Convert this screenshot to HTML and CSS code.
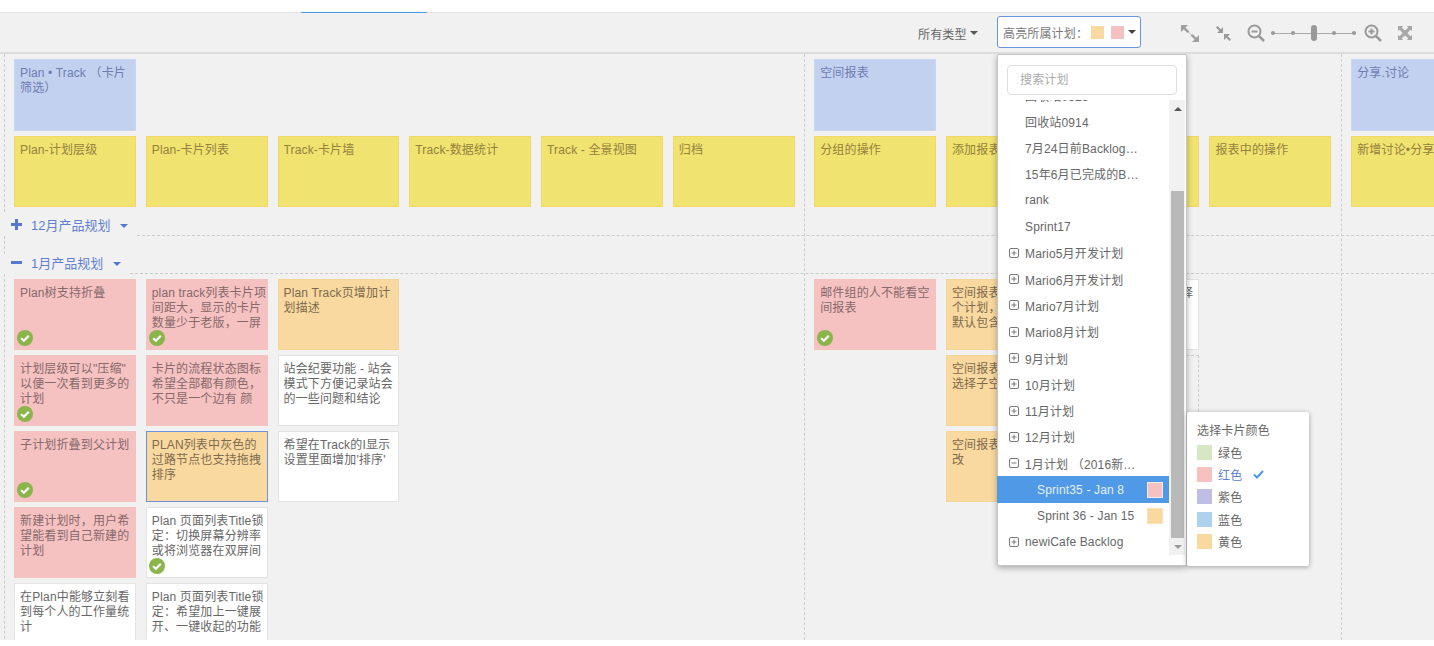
FILE: index.html

```html
<!DOCTYPE html>
<html lang="zh-CN">
<head>
  <meta charset="UTF-8">
  <meta name="viewport" content="width=device-width, initial-scale=1.0">
  <title>Plan</title>
  <link rel="stylesheet" href="styles.css">
</head>
<body>

  <svg class="defs" width="0" height="0">
    <symbol id="i-plus" viewBox="0 0 10 10">
      <rect x="0.5" y="0.5" width="9" height="9" rx="1.5" fill="none" stroke="#777"/>
      <path d="M2.5 5h5M5 2.5v5" stroke="#777" fill="none"/>
    </symbol>
    <symbol id="i-minus" viewBox="0 0 10 10">
      <rect x="0.5" y="0.5" width="9" height="9" rx="1.5" fill="none" stroke="#777"/>
      <path d="M2.5 5h5" stroke="#777" fill="none"/>
    </symbol>
    <symbol id="i-check" viewBox="0 0 16 16">
      <circle cx="8" cy="8" r="8" fill="#8ab54a"/>
      <path d="M4.2 8.2l2.7 2.6 4.9-5" fill="none" stroke="#fff" stroke-width="2.2"/>
    </symbol>
  </svg>

  <div class="topbar"><div class="tab"></div></div>

  <div class="toolbar">
    <div class="type-filter">所有类型<span class="caret"></span></div>
    <div class="highlight-btn">
      <span>高亮所属计划：</span>
      <span class="mini-swatch orange first"></span>
      <span class="mini-swatch pink"></span>
      <span class="caret dark"></span>
    </div>
    <svg class="tool tool-expand" width="18" height="17" viewBox="0 0 18 17">
      <path d="M0 0h7L0 7zM18 17h-7l7-7z" fill="#a0a0a0"/>
      <path d="M3 3l4.500 4.200M15 14l-4.500-4.200" stroke="#a0a0a0" stroke-width="2.400" fill="none"/>
      <path d="M7 7l4 3" stroke="#c4c4c4" stroke-width="1" fill="none"/>
    </svg>
    <svg class="tool tool-compress" width="15" height="15" viewBox="0 0 15 15">
      <path d="M0.700 0.700l4.500 4.500M14.300 14.300l-4.500-4.500" stroke="#9a9a9a" stroke-width="2.200" fill="none"/>
      <path d="M7 7H1L7 1zM8 8h6l-6 6z" fill="#9a9a9a"/>
    </svg>
    <svg class="tool tool-zoomout" width="18" height="18" viewBox="0 0 18 18">
      <circle cx="7.500" cy="7.500" r="6" fill="none" stroke="#9a9a9a" stroke-width="2"/>
      <path d="M4.500 7.500h6" stroke="#9a9a9a" stroke-width="2"/>
      <path d="M12 12l5 5" stroke="#9a9a9a" stroke-width="2.500"/>
    </svg>
    <div class="slider">
      <span class="dot"></span><span class="dot"></span><span class="thumb"></span><span class="dot"></span><span class="dot"></span>
    </div>
    <svg class="tool tool-zoomin" width="18" height="18" viewBox="0 0 18 18">
      <circle cx="7.500" cy="7.500" r="6" fill="none" stroke="#9a9a9a" stroke-width="2"/>
      <path d="M4.500 7.500h6M7.500 4.500v6" stroke="#9a9a9a" stroke-width="2"/>
      <path d="M12 12l5 5" stroke="#9a9a9a" stroke-width="2.500"/>
    </svg>
    <svg class="tool tool-full" width="14" height="14" viewBox="0 0 14 14">
      <path d="M0 0h5L3.800 1.700 7 4.600 10.200 1.700 9 0h5v5L12.300 3.800 9.400 7l2.900 3.200L14 9v5H9l1.200-1.700L7 9.400l-3.200 2.900L5 14H0V9l1.700 1.200L4.600 7 1.700 3.800 0 5z" fill="#a8a8a8"/>
    </svg>
  </div>

  <div class="board">
    <div class="col-line line-b"></div>
    <div class="col-line line-c"></div>

    <!-- top story map -->
    <div class="groups story">
      <div class="group first">
        <div class="story-row">
          <div class="card blue tall"><div class="card-text">Plan • Track （卡片筛选）</div></div>
        </div>
        <div class="story-row">
          <div class="card yellow"><div class="card-text">Plan-计划层级</div></div>
          <div class="card yellow"><div class="card-text">Plan-卡片列表</div></div>
          <div class="card yellow"><div class="card-text">Track-卡片墙</div></div>
          <div class="card yellow"><div class="card-text">Track-数据统计</div></div>
          <div class="card yellow"><div class="card-text">Track - 全景视图</div></div>
          <div class="card yellow"><div class="card-text">归档</div></div>
        </div>
      </div>
      <div class="group">
        <div class="story-row">
          <div class="card blue tall"><div class="card-text">空间报表</div></div>
        </div>
        <div class="story-row">
          <div class="card yellow"><div class="card-text">分组的操作</div></div>
          <div class="card yellow"><div class="card-text">添加报表</div></div>
          <div class="card yellow"><div class="card-text">报表设置</div></div>
          <div class="card yellow"><div class="card-text">报表中的操作</div></div>
        </div>
      </div>
      <div class="group">
        <div class="story-row">
          <div class="card blue tall"><div class="card-text">分享.讨论</div></div>
        </div>
        <div class="story-row">
          <div class="card yellow"><div class="card-text">新增讨论•分享</div></div>
        </div>
      </div>
    </div>

    <div class="lane-head">
      <svg class="lane-icon" width="11" height="11" viewBox="0 0 11 11"><path d="M0 4h4V0h3v4h4v3H7v4H4V7H0z" fill="#5577cf"/></svg>
      <span class="lane-title">12月产品规划</span>
      <span class="caret blue-caret"></span>
      <span class="lane-line"></span>
    </div>
    <div class="lane-gap"></div>

    <div class="lane-head second">
      <svg class="lane-icon" width="11" height="11" viewBox="0 0 11 11"><path d="M0 4h11v3H0z" fill="#5577cf"/></svg>
      <span class="lane-title">1月产品规划</span>
      <span class="caret blue-caret"></span>
      <span class="lane-line"></span>
    </div>

    <div class="groups">
      <div class="group first lane-body">
        <div class="col">
          <div class="card pink"><div class="card-text">Plan树支持折叠</div><svg class="done"><use href="#i-check"/></svg></div>
          <div class="card pink"><div class="card-text">计划层级可以"压缩"<wbr>以便一次看到更多的计划</div><svg class="done"><use href="#i-check"/></svg></div>
          <div class="card pink"><div class="card-text">子计划折叠到父计划</div><svg class="done"><use href="#i-check"/></svg></div>
          <div class="card pink"><div class="card-text">新建计划时，用户希望能看到自己新建的计划</div></div>
          <div class="card white"><div class="card-text">在Plan中能够立刻看到每个人的工作量统计</div></div>
        </div>
        <div class="col">
          <div class="card pink"><div class="card-text">plan track列表卡片项间距大，显示的卡片数量少于老版，一屏</div><svg class="done"><use href="#i-check"/></svg></div>
          <div class="card pink"><div class="card-text">卡片的流程状态图标希望全部都有颜色，不只是一个边有 颜</div></div>
          <div class="card orange selected"><div class="card-text">PLAN列表中灰色的过路节点也支持拖拽排序</div></div>
          <div class="card white"><div class="card-text">Plan 页面列表Title锁定：切换屏幕分辨率或将浏览器在双屏间</div><svg class="done"><use href="#i-check"/></svg></div>
          <div class="card white"><div class="card-text">Plan 页面列表Title锁定：希望加上一键展开、一键收起的功能</div></div>
        </div>
        <div class="col">
          <div class="card orange"><div class="card-text">Plan Track页增加计划描述</div></div>
          <div class="card white"><div class="card-text">站会纪要功能 - 站会模式下方便记录站会的一些问题和结论</div></div>
          <div class="card white"><div class="card-text">希望在Track的I显示设置里面增加'排序'</div></div>
        </div>
        <div class="col"></div>
        <div class="col"></div>
        <div class="col"></div>
      </div>
      <div class="group lane-body">
        <div class="col">
          <div class="card pink"><div class="card-text">邮件组的人不能看空间报表</div><svg class="done"><use href="#i-check"/></svg></div>
        </div>
        <div class="col">
          <div class="card orange"><div class="card-text">空间报表可以选择多个计划，默认全选，默认包含子计划</div></div>
          <div class="card orange"><div class="card-text">空间报表支持按空间选择子空间</div></div>
          <div class="card orange"><div class="card-text">空间报表颜色支持修改</div></div>
        </div>
        <div class="col">
          <div class="card white"><div class="card-text">在空间报表中可选择</div></div>
          <div class="card placeholder"></div>
        </div>
        <div class="col"></div>
      </div>
    </div>

    <!-- plan dropdown -->
    <div class="plan-menu">
      <div class="search">搜索计划</div>
      <div class="menu-body">
        <div class="plan-list">
          <div class="plan-row cut"><span class="plan-name">回收站0825</span></div>
          <div class="plan-row"><span class="plan-name">回收站0914</span></div>
          <div class="plan-row"><span class="plan-name">7月24日前Backlog整理计划</span></div>
          <div class="plan-row"><span class="plan-name">15年6月已完成的Backlog</span></div>
          <div class="plan-row"><span class="plan-name">rank</span></div>
          <div class="plan-row"><span class="plan-name">Sprint17</span></div>
          <div class="plan-row parent"><svg class="tree-icon"><use href="#i-plus"/></svg><span class="plan-name">Mario5月开发计划</span></div>
          <div class="plan-row parent"><svg class="tree-icon"><use href="#i-plus"/></svg><span class="plan-name">Mario6月开发计划</span></div>
          <div class="plan-row parent"><svg class="tree-icon"><use href="#i-plus"/></svg><span class="plan-name">Mario7月计划</span></div>
          <div class="plan-row parent"><svg class="tree-icon"><use href="#i-plus"/></svg><span class="plan-name">Mario8月计划</span></div>
          <div class="plan-row parent"><svg class="tree-icon"><use href="#i-plus"/></svg><span class="plan-name">9月计划</span></div>
          <div class="plan-row parent"><svg class="tree-icon"><use href="#i-plus"/></svg><span class="plan-name">10月计划</span></div>
          <div class="plan-row parent"><svg class="tree-icon"><use href="#i-plus"/></svg><span class="plan-name">11月计划</span></div>
          <div class="plan-row parent"><svg class="tree-icon"><use href="#i-plus"/></svg><span class="plan-name">12月计划</span></div>
          <div class="plan-row parent"><svg class="tree-icon"><use href="#i-minus"/></svg><span class="plan-name">1月计划 （2016新版计划）</span></div>
          <div class="plan-row child active"><span class="plan-name">Sprint35 - Jan 8</span><span class="swatch pink"></span></div>
          <div class="plan-row child"><span class="plan-name">Sprint 36 - Jan 15</span><span class="swatch orange"></span></div>
          <div class="plan-row parent"><svg class="tree-icon"><use href="#i-plus"/></svg><span class="plan-name">newiCafe Backlog</span></div>
        </div>
        <div class="scrollbar">
          <div class="scroll-up"><span class="caret up"></span></div>
          <div class="scroll-thumb"></div>
          <div class="scroll-down"><span class="caret grey"></span></div>
        </div>
      </div>
    </div>

    <div class="color-menu">
      <div class="color-title">选择卡片颜色</div>
      <div class="color-row"><span class="color-box green"></span>绿色</div>
      <div class="color-row picked"><span class="color-box pink"></span>红色<svg class="tick" width="11" height="9" viewBox="0 0 11 9"><path d="M1 4.500l3 3 6-6.500" fill="none" stroke="#4a98e8" stroke-width="2"/></svg></div>
      <div class="color-row"><span class="color-box purple"></span>紫色</div>
      <div class="color-row"><span class="color-box sky"></span>蓝色</div>
      <div class="color-row"><span class="color-box orange"></span>黄色</div>
    </div>
  </div>

  <div class="bottom-strip"></div>

</body>
</html>
```

FILE: styles.css

```css
* { box-sizing: border-box; }
html, body { height: 100%; }
body {
  margin: 0;
  background: #f1f1f1;
  font-family: "Liberation Sans", "Noto Sans CJK TC", sans-serif;
  font-size: 12px;
  letter-spacing: 0.15px;
  color: #666;
  overflow: hidden;
}
.defs { position: absolute; }

.topbar {
  height: 13px;
  background: #fff;
  border-bottom: 1px solid #e4e4e4;
  padding-left: 301px;
}
.tab {
  width: 126px;
  height: 13px;
  border-bottom: 1px solid #4a98e8;
}

.toolbar {
  height: 41px;
  border-bottom: 2px solid #dcdcdc;
  display: flex;
  align-items: center;
  padding: 0 0 1px 918px;
}
.type-filter { flex: none; display: flex; align-items: center; width: 79px; margin-top: 2px; color: #666; }
.caret {
  display: inline-block;
  width: 0;
  height: 0;
  border-left: 4px solid transparent;
  border-right: 4px solid transparent;
  border-top: 4px solid #555;
  margin-left: 3px;
}
.caret.dark { border-top-color: #444; margin-left: 4px; }
.caret.grey { border-top-color: #999; margin: 0; }
.caret.up { border-top: 0; border-bottom: 4px solid #555; margin: 0; }
.highlight-btn {
  flex: none;
  width: 144px;
  height: 32px;
  background: #fff;
  border: 1px solid #6d92dd;
  border-radius: 3px;
  display: flex;
  align-items: center;
  padding-left: 5px;
  color: #777;
}
.mini-swatch { flex: none; width: 13px; height: 13px; }
.mini-swatch.first { margin-left: 3px; margin-right: 7px; }
.mini-swatch.orange { background: #f9d9a0; }
.mini-swatch.pink { background: #f6c1c1; }

.tool { flex: none; margin-top: 2px; }
.tool-expand { margin-left: 40px; }
.tool-compress { margin-left: 17px; }
.tool-zoomout { margin-left: 16px; }
.tool-zoomin { margin-left: 8px; }
.tool-full { margin-left: 16px; }
.slider {
  flex: none;
  width: 85px;
  margin: 2px 0 0 6px;
  height: 16px;
  display: flex;
  align-items: center;
  justify-content: space-between;
  background: linear-gradient(#aaa, #aaa) center / 100% 1px no-repeat;
}
.dot { width: 4px; height: 4px; border-radius: 50%; background: #999; }
.thumb { width: 6px; height: 16px; border-radius: 3px; background: #999; }

.board {
  position: relative;
  height: 586px;
  overflow: hidden;
}
.col-line {
  position: absolute;
  top: 0;
  bottom: 0;
  border-left: 1px dashed #ccc;
}
.line-b { left: 804px; }
.line-c { left: 1341px; }

.groups { display: flex; width: 1600px; }
.group { flex: none; padding: 0 10px; }
.group.first { width: 800.2px; margin-left: 4px; padding-left: 9px; padding-right: 0; border-left: 1px dashed #ccc; }
.story .group { padding-top: 5px; padding-bottom: 5px; display: flex; flex-direction: column; gap: 5px; }
.story-row { display: flex; gap: 10px; }

.card {
  position: relative;
  flex: none;
  width: 121.75px;
  height: 71px;
  border: 1px solid #eee;
  padding: 6px 0 0 5px;
  line-height: 15px;
  overflow: hidden;
}
.card.tall { height: 72px; }
.card-text { max-height: 45px; overflow: hidden; }
.card.blue { background: #c2d1f0; border-color: #cbd8f3; color: #6f7cb0; }
.card.yellow { background: #f0e370; border-color: #f1d768; color: #93813c; }
.card.pink { background: #f6c1c1; border-color: #f2c4c0; color: #85696b; }
.card.orange { background: #f9d9a0; border-color: #f5d596; color: #7d6a4e; }
.card.white { background: #fff; border-color: #e3e3e3; color: #666; }
.card.selected { border-color: #6d92dd; }
.card.placeholder { background: none; border: 1px dashed #ccc; }
.done {
  position: absolute;
  left: 2px;
  bottom: 3px;
  width: 16px;
  height: 16px;
}

.lane-head {
  height: 24px;
  display: flex;
  align-items: center;
  padding-left: 11px;
  color: #5f7ed0;
  font-size: 13px;
  letter-spacing: 0;
}
.lane-head.second { height: 20px; padding-bottom: 4px; }
.second .lane-line { margin-bottom: -4px; }
.lane-icon { flex: none; margin-right: 9px; }
.lane-title { flex: none; }
.blue-caret { border-top-color: #5577cf; margin: 3px 0 0 10px; flex: none; }
.lane-line {
  flex: 1;
  align-self: flex-end;
  margin-left: 9px;
  border-bottom: 1px dashed #ccc;
}
.lane-gap { height: 18px; margin-left: 4px; border-left: 1px dashed #ccc; }

.lane-body { display: flex; gap: 10px; padding-top: 5px; height: 400px; }
.col { flex: none; width: 121.75px; display: flex; flex-direction: column; gap: 5px; }

/* dropdown over the board */
.plan-menu {
  position: absolute;
  left: 997px;
  top: 0;
  width: 190px;
  height: 512px;
  background: #fff;
  border: 1px solid #c4c4c4;
  box-shadow: 0 2px 6px rgba(0,0,0,0.3);
  border-radius: 2px;
  z-index: 2;
}
.search {
  margin: 10px 9px 5px;
  height: 30px;
  border: 1px solid #ddd;
  border-radius: 4px;
  padding-left: 12px;
  line-height: 28px;
  color: #aaa;
}
.menu-body { display: flex; height: 455px; }
.plan-list { width: 172px; overflow: hidden; flex: none; margin-left: -1px; }
.plan-row {
  height: 26.3px;
  display: flex;
  align-items: center;
  padding-left: 28px;
  color: #666;
}
.plan-row.cut { margin-top: -18.1px; }
.plan-row.parent { padding-left: 12px; }
.plan-row.child { padding-left: 40px; }
.plan-row.active { background: #4f99e6; color: #e4f0fc; }
.plan-name {
  max-width: 114px;
  white-space: nowrap;
  overflow: hidden;
  text-overflow: ellipsis;
}
.plan-row.child .plan-name { max-width: 104px; width: 104px; }
.tree-icon { flex: none; width: 10px; height: 10px; margin-right: 6px; }
.swatch {
  width: 16px;
  height: 16px;
  margin-left: 6px;
  border: 1px solid #eee;
}
.swatch.pink { background: #f6c1c1; }
.swatch.orange { background: #f9d9a0; border-color: #fbe3b8; }

.scrollbar {
  width: 16px;
  flex: none;
  background: #f1f1f1;
  padding-left: 2px;
  display: flex;
  flex-direction: column;
}
.scroll-up {
  height: 91px;
  padding-top: 7px;
  display: flex;
  justify-content: center;
  align-items: flex-start;
}
.scroll-thumb { height: 347px; width: 13px; background: #b9b9b9; }
.scroll-down { height: 17px; display: flex; justify-content: center; align-items: center; }

.color-menu {
  position: absolute;
  left: 1187px;
  top: 358px;
  width: 122px;
  height: 154px;
  background: #fff;
  border-radius: 2px;
  box-shadow: 0 1px 5px rgba(0,0,0,0.35);
  padding: 11px 10px 0;
  z-index: 3;
}
.color-title { line-height: 16px; margin-bottom: 2px; color: #666; }
.color-row {
  height: 22.4px;
  display: flex;
  align-items: center;
  color: #666;
}
.color-row.picked { color: #5f7ed0; }
.color-box { width: 15px; height: 15px; margin-right: 6px; }
.color-box.green { background: #d5e8c3; }
.color-box.pink { background: #f6c1c1; }
.color-box.purple { background: #c0bde6; }
.color-box.sky { background: #aed2ee; }
.color-box.orange { background: #f9d9a0; }
.tick { margin-left: 11px; }

.bottom-strip { height: 6px; background: #fff; }
```
